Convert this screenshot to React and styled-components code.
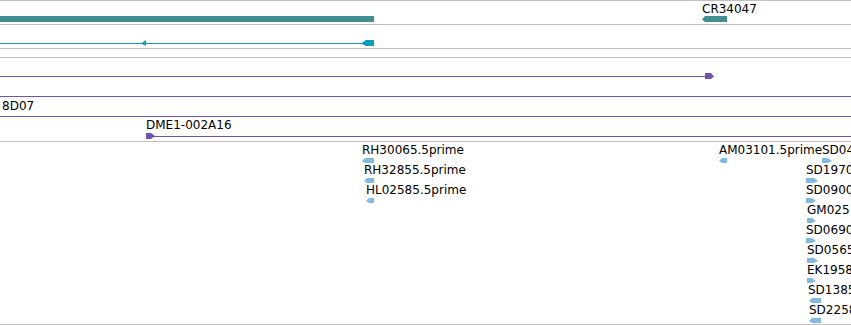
import React from 'react';
import styled, { createGlobalStyle } from 'styled-components';

const GRID = '#c0c0c0';
const TEAL = '#418f91';
const CYAN = '#0e9cbd';
const PURPLE = '#7153b0';
const EST = '#82b9e0';

const GlobalStyle = createGlobalStyle`
  html, body {
    margin: 0;
    padding: 0;
    background: #fff;
    overflow: hidden;
  }
`;

/* whole track panel */
const Panel = styled.div`
  width: 851px;
  border-top: 1px solid ${GRID};
  font-family: "DejaVu Sans", Verdana, sans-serif;
  font-size: 12px;
  color: #000;
  overflow: hidden;
`;

/* one track, features are placed on its canvas */
const Track = styled.div`
  position: relative;
  height: ${({ $h }) => $h}px;
  border-bottom: 1px solid ${GRID};
  overflow: hidden;
`;

const Glyphs = styled.svg`
  position: absolute;
  left: 0;
  top: 0;
  display: block;
`;

const Feature = styled.div.attrs(({ $x, $y }) => ({ style: { left: $x, top: $y } }))`
  position: absolute;
  display: flex;
  flex-direction: column;
  align-items: flex-start;
`;

const Label = styled.span`
  line-height: 14px;
  white-space: nowrap;
`;

const Tick = styled.svg`
  display: block;
  margin-top: ${({ $gap }) => $gap}px;
  margin-left: ${({ $dx }) => $dx || 0}px;
`;

const Arrow = ({ w, h = 5, dir, color, gap = 1, dx }) => {
  const pts = dir === 'L'
    ? `0,${h * 0.6} 3,0 ${w},0 ${w},${h} 3,${h}`
    : `0,0 ${w - 4},0 ${w},${h * 0.6} ${w - 4},${h} 0,${h}`;
  return (
    <Tick width={w} height={h} viewBox={`0 0 ${w} ${h}`} $gap={gap} $dx={dx}>
      <polygon points={pts} fill={color} />
    </Tick>
  );
};

const ests = [
  { name: 'RH30065.5prime', x: 362, row: 0, w: 12, dir: 'L' },
  { name: 'AM03101.5prime', x: 719, row: 0, w: 8, dir: 'L' },
  { name: 'SD04', x: 822, row: 0, w: 10, dir: 'R' },
  { name: 'RH32855.5prime', x: 364, row: 1, w: 10, dir: 'L' },
  { name: 'SD1970', x: 806, row: 1, w: 12, dir: 'R' },
  { name: 'HL02585.5prime', x: 366, row: 2, w: 8, dir: 'L' },
  { name: 'SD0900', x: 806, row: 2, w: 10, dir: 'R' },
  { name: 'GM025', x: 807, row: 3, w: 9, dir: 'R' },
  { name: 'SD0690', x: 806, row: 4, w: 10, dir: 'R' },
  { name: 'SD0565', x: 807, row: 5, w: 11, dir: 'R' },
  { name: 'EK1958', x: 807, row: 6, w: 9, dir: 'R' },
  { name: 'SD1385', x: 808, row: 7, w: 12, dir: 'L', dx: 1 },
  { name: 'SD2258', x: 809, row: 8, w: 12, dir: 'L' },
];

export default function App() {
  return (
    <>
      <GlobalStyle />
      <Panel>
        <Track $h={23}>
          <Glyphs width="851" height="23">
            <rect x="0" y="15" width="374" height="6" fill={TEAL} />
          </Glyphs>
          <Feature $x={702} $y={1}>
            <Label>CR34047</Label>
            <Arrow w={25} h={6} dir="L" color={TEAL} gap={0} />
          </Feature>
        </Track>

        <Track $h={23}>
          <Glyphs width="851" height="23">
            <rect x="0" y="18" width="362" height="1" fill={CYAN} />
            <polygon points="141,18.5 146,15 146,21" fill={CYAN} />
            <polygon points="361,18.5 366,15 374,15 374,21 366,21" fill={CYAN} />
          </Glyphs>
        </Track>

        <Track $h={8} />

        <Track $h={83}>
          <Glyphs width="851" height="83">
            <rect x="0" y="18" width="706" height="1" fill={PURPLE} />
            <polygon points="705,15 711,15 714,18.5 711,21 705,21" fill={PURPLE} />
            <rect x="0" y="38" width="851" height="1" fill={PURPLE} />
            <rect x="0" y="58" width="851" height="1" fill={PURPLE} />
            <rect x="150" y="78" width="701" height="1" fill={PURPLE} />
            <polygon points="146,75 151,75 155,78 151,81 146,81" fill={PURPLE} />
          </Glyphs>
          <Feature $x={2} $y={41}>
            <Label>8D07</Label>
          </Feature>
          <Feature $x={146} $y={60}>
            <Label>DME1-002A16</Label>
          </Feature>
        </Track>

        <Track $h={182}>
          {ests.map(e => (
            <Feature key={e.name} $x={e.x} $y={1 + e.row * 20}>
              <Label>{e.name}</Label>
              <Arrow w={e.w} dir={e.dir} color={EST} dx={e.dx} />
            </Feature>
          ))}
        </Track>
      </Panel>
    </>
  );
}
